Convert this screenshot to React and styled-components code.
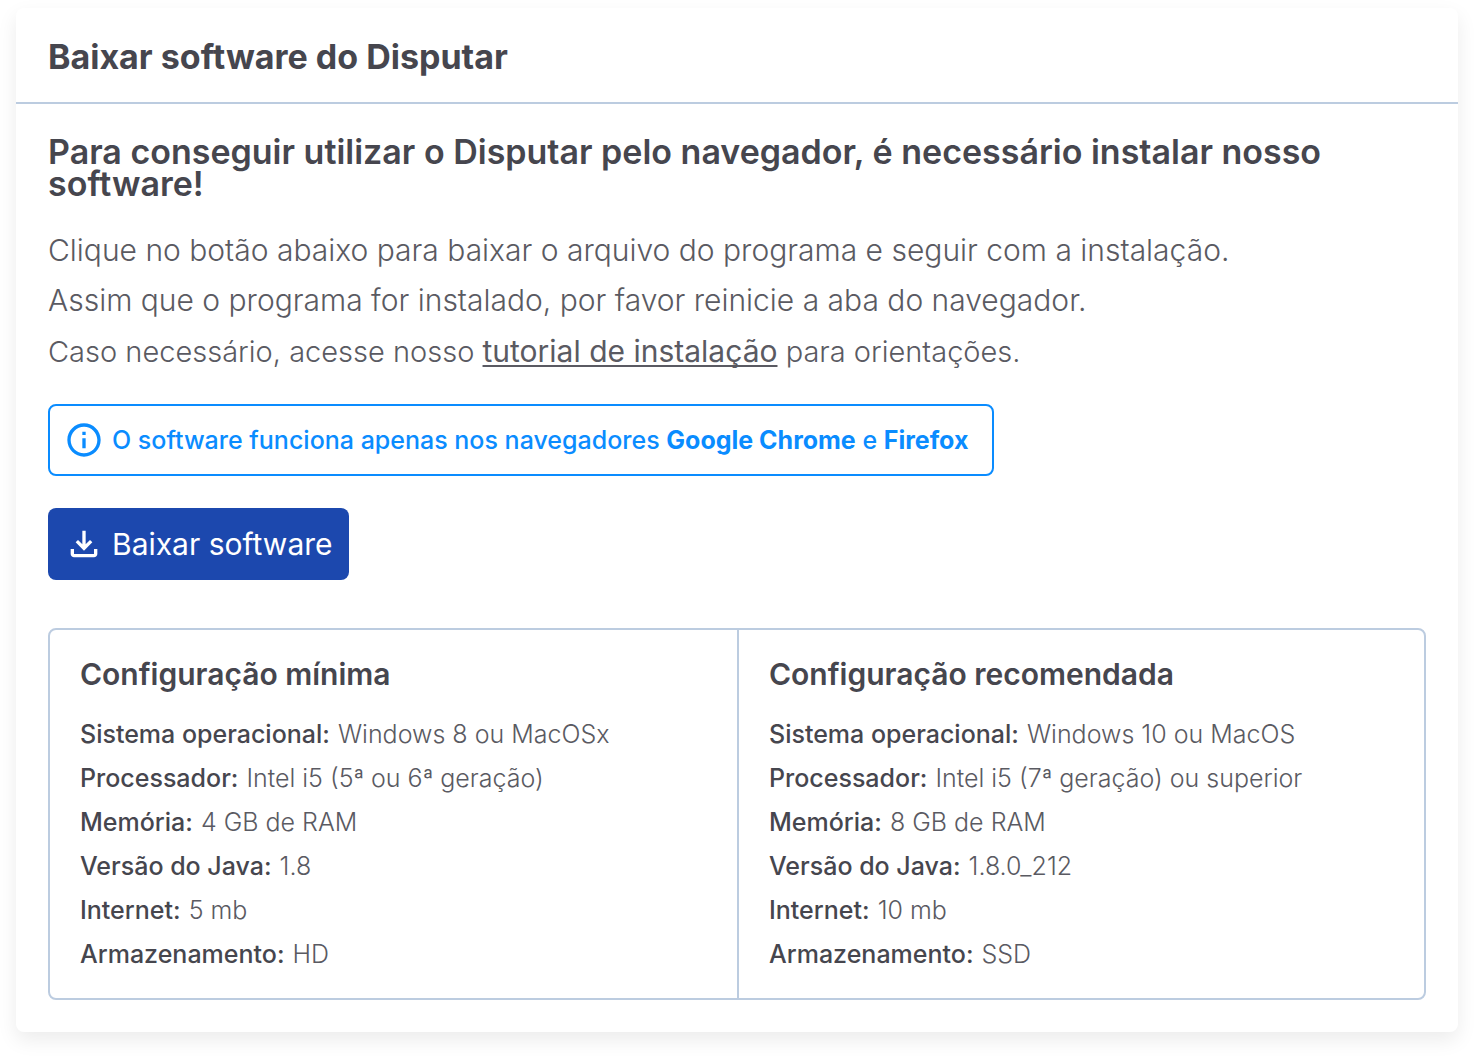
import React from "react";
import styled, { createGlobalStyle } from "styled-components";
import { MdInfoOutline } from "react-icons/md";

const minimum = [
  ["Sistema operacional", "Windows 8 ou MacOSx"],
  ["Processador", "Intel i5 (5ª ou 6ª geração)"],
  ["Memória", "4 GB de RAM"],
  ["Versão do Java", "1.8"],
  ["Internet", "5 mb"],
  ["Armazenamento", "HD"],
];

const recommended = [
  ["Sistema operacional", "Windows 10 ou MacOS"],
  ["Processador", "Intel i5 (7ª geração) ou superior"],
  ["Memória", "8 GB de RAM"],
  ["Versão do Java", "1.8.0_212"],
  ["Internet", "10 mb"],
  ["Armazenamento", "SSD"],
];

const DownloadIcon = () => (
  <svg width="40" height="40" viewBox="0 -960 960 960" fill="currentColor" aria-hidden="true">
    <path d="M480-320 280-520l56-58 104 104v-326h80v326l104-104 56 58-200 200ZM240-160q-33 0-56.5-23.5T160-240v-120h80v120h480v-120h80v120q0 33-23.5 56.5T720-160H240Z" />
  </svg>
);

const Requirements = ({ title, items }) => (
  <Column>
    <ColumnTitle>{title}</ColumnTitle>
    <List>
      {items.map(([label, value]) => (
        <Item key={label}>
          <dt>{label}:</dt>
          <dd>{value}</dd>
        </Item>
      ))}
    </List>
  </Column>
);

const App = () => {
  return (
    <>
      <GlobalStyle />
      <Card>
        <Header>
          <Title>Baixar software do Disputar</Title>
        </Header>
        <Body>
          <Heading>
            Para conseguir utilizar o Disputar pelo navegador, é necessário
            instalar nosso software!
          </Heading>
          <Intro>
            <p>
              Clique no botão abaixo para baixar o arquivo do programa e seguir
              com a instalação.
            </p>
            <p>
              Assim que o programa for instalado, por favor reinicie a aba do
              navegador.
            </p>
            <Guide>
              Caso necessário, acesse nosso{" "}
              <TutorialLink href="#tutorial">tutorial de instalação</TutorialLink>{" "}
              para orientações.
            </Guide>
          </Intro>
          <Notice>
            <MdInfoOutline size={40} aria-hidden="true" />
            <span>
              O software funciona apenas nos navegadores{" "}
              <strong>Google Chrome</strong> e <strong>Firefox</strong>
            </span>
          </Notice>
          <DownloadButton type="button">
            <DownloadIcon />
            Baixar software
          </DownloadButton>
          <Specs>
            <Requirements title="Configuração mínima" items={minimum} />
            <Requirements title="Configuração recomendada" items={recommended} />
          </Specs>
        </Body>
      </Card>
    </>
  );
};

const GlobalStyle = createGlobalStyle`
  * {
    box-sizing: border-box;
  }
  body {
    margin: 0;
    background: #fff;
    color: #46464e;
    font-family: Inter, "Open Sans", sans-serif;
  }
  h1, h2, h3, p, dl, dd {
    margin: 0;
  }
`;

const Card = styled.main`
  margin: 8px 16px 24px;
  border-radius: 8px;
  background: #fff;
  box-shadow: 0 8px 20px rgba(0, 0, 0, 0.08);
`;

const Header = styled.header`
  padding: 28px 32px 24px;
  border-bottom: 2px solid #bccce0;
`;

const Title = styled.h1`
  font-size: 34px;
  line-height: 42px;
  font-weight: 700;
`;

const Body = styled.div`
  display: flex;
  flex-direction: column;
  align-items: flex-start;
  padding: 32px;
`;

const Heading = styled.h2`
  font-size: 34px;
  line-height: 32px;
  font-weight: 600;
`;

const Intro = styled.div`
  display: flex;
  flex-direction: column;
  gap: 10px;
  margin: 30px 0;
  color: #5a5a62;
  font-size: 30px;
  line-height: 40px;
  font-weight: 300;
`;

const Guide = styled.p`
  font-size: 29px;
  line-height: 44px;
`;

const TutorialLink = styled.a`
  color: inherit;
  font-size: 30px;
  line-height: 40px;
  font-weight: 400;
  text-decoration: underline;
  text-decoration-thickness: 2px;
  text-underline-offset: 3px;
  text-decoration-skip-ink: none;
`;

const Notice = styled.div`
  display: flex;
  align-items: center;
  gap: 8px;
  padding: 14px 24px 14px 14px;
  border: 2px solid #0a8cff;
  border-radius: 8px;
  color: #0a8cff;
  font-size: 25px;
  line-height: 40px;
  font-weight: 500;

  strong {
    font-weight: 700;
  }
`;

const DownloadButton = styled.button`
  display: flex;
  align-items: center;
  gap: 8px;
  margin: 32px 0 48px;
  padding: 16px;
  border: none;
  border-radius: 8px;
  background: #1c48ae;
  color: #fff;
  font-family: inherit;
  font-size: 30px;
  line-height: 40px;
  cursor: pointer;
`;

const Specs = styled.div`
  display: grid;
  grid-template-columns: 1fr 1fr;
  width: 100%;
  border: 2px solid #bccce0;
  border-radius: 8px;
`;

const Column = styled.section`
  padding: 28px 30px;

  & + & {
    border-left: 2px solid #bccce0;
  }
`;

const ColumnTitle = styled.h3`
  margin-bottom: 28px;
  font-size: 30px;
  line-height: 32px;
  font-weight: 600;
`;

const List = styled.dl`
  display: flex;
  flex-direction: column;
  gap: 12px;
  font-size: 25px;
  line-height: 32px;
`;

const Item = styled.div`
  display: flex;
  gap: 8px;

  dt {
    font-weight: 500;
  }
  dd {
    color: #5a5a62;
    font-weight: 300;
  }
`;

export default App;
